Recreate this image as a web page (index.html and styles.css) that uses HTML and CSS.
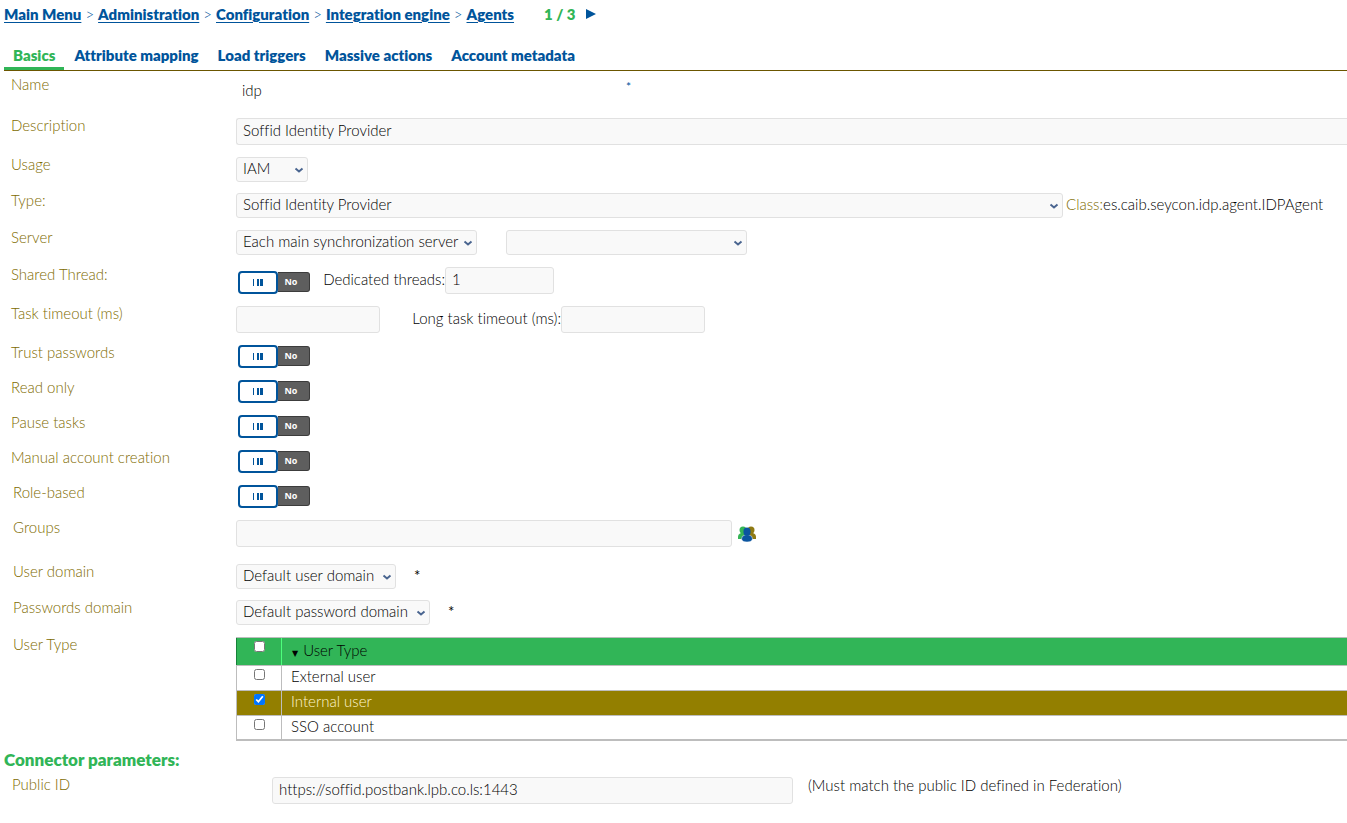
FILE: index.html
```html
<!DOCTYPE html>
<html lang="en">
<head>
<meta charset="utf-8">
<title>Agents</title>
<link rel="stylesheet" href="styles.css">
</head>
<body>
<header class="topbar">
  <nav class="crumbs" aria-label="Breadcrumb">
    <a href="#">Main Menu</a><span>&gt;</span><a href="#">Administration</a><span>&gt;</span><a href="#">Configuration</a><span>&gt;</span><a href="#">Integration engine</a><span>&gt;</span><a href="#">Agents</a>
  </nav>
  <div class="pager">1 / 3
    <button class="next" aria-label="Next"><svg width="10" height="10" viewBox="0 0 10 10"><path d="M0 0L10 5L0 10Z" fill="#00549b"/></svg></button>
  </div>
</header>
<nav class="tabs">
  <a class="tab active" href="#">Basics</a>
  <a class="tab" href="#">Attribute mapping</a>
  <a class="tab" href="#">Load triggers</a>
  <a class="tab" href="#">Massive actions</a>
  <a class="tab" href="#">Account metadata</a>
</nav>
<main>
  <div class="row tall"><label class="name" for="name">Name</label>
    <div class="field"><input class="box plain" id="name" value="idp"><span class="required">*</span></div></div>
  <div class="row input-row"><label class="name" for="desc">Description</label>
    <div class="field"><input class="box full" id="desc" value="Soffid Identity Provider"></div></div>
  <div class="row compact"><label class="name" for="usage">Usage</label>
    <div class="field"><select class="box w-usage" id="usage"><option>IAM</option></select></div></div>
  <div class="row"><label class="name" for="type">Type:</label>
    <div class="field"><select class="box w-type" id="type"><option>Soffid Identity Provider</option></select><span class="class-name"><span class="gold">Class:</span>es.caib.seycon.idp.agent.IDPAgent</span></div></div>
  <div class="row"><label class="name" for="server">Server</label>
    <div class="field"><select class="box w-server" id="server"><option>Each main synchronization server</option></select><select class="box w-server second" aria-label="Secondary server"><option></option></select></div></div>
  <div class="row input-row"><span class="name" id="l-shared">Shared Thread:</span>
    <div class="field"><button class="toggle low" role="switch" aria-checked="false" aria-labelledby="l-shared"><span class="knob"><i></i><i></i><i></i></span><span class="off">No</span></button><label class="inline threads" for="threads">Dedicated threads:</label><input class="box w-threads" id="threads" value="1"></div></div>
  <div class="row input-row"><label class="name" for="timeout">Task timeout (ms)</label>
    <div class="field"><input class="box w-timeout" id="timeout"><label class="inline long" for="long">Long task timeout (ms):</label><input class="box w-timeout" id="long"></div></div>
  <div class="row short"><span class="name" id="l-trust">Trust passwords</span>
    <div class="field"><button class="toggle" role="switch" aria-checked="false" aria-labelledby="l-trust"><span class="knob"><i></i><i></i><i></i></span><span class="off">No</span></button></div></div>
  <div class="row short"><span class="name" id="l-read">Read only</span>
    <div class="field"><button class="toggle" role="switch" aria-checked="false" aria-labelledby="l-read"><span class="knob"><i></i><i></i><i></i></span><span class="off">No</span></button></div></div>
  <div class="row short"><span class="name" id="l-pause">Pause tasks</span>
    <div class="field"><button class="toggle" role="switch" aria-checked="false" aria-labelledby="l-pause"><span class="knob"><i></i><i></i><i></i></span><span class="off">No</span></button></div></div>
  <div class="row short"><span class="name" id="l-manual">Manual account creation</span>
    <div class="field"><button class="toggle" role="switch" aria-checked="false" aria-labelledby="l-manual"><span class="knob"><i></i><i></i><i></i></span><span class="off">No</span></button></div></div>
  <div class="row short indent"><span class="name" id="l-role">Role-based</span>
    <div class="field"><button class="toggle" role="switch" aria-checked="false" aria-labelledby="l-role"><span class="knob"><i></i><i></i><i></i></span><span class="off">No</span></button></div></div>
  <div class="row groups indent"><label class="name" for="groups">Groups</label>
    <div class="field"><input class="box w-groups" id="groups"><button class="pick" aria-label="Select groups"><svg width="18" height="16" viewBox="0 0 18 16">
      <g fill="#35b556"><circle cx="5" cy="4" r="3.5"/><path d="M0 13V11Q0 8 3 7H8V13Z"/></g>
      <g fill="#8f7a13"><circle cx="13" cy="4" r="3.5"/><path d="M18 13V11Q18 8 15 7H10V13Z"/></g>
      <g fill="#0b55a0"><path stroke="#fff" stroke-width=".5" d="M3.500 13Q3.500 9.500 7 9H11Q14.500 9.500 14.500 13Q14 16 9 16Q4 16 3.500 13Z"/><ellipse cx="9" cy="5.700" rx="3.600" ry="4.200"/></g></svg></button></div></div>
  <div class="row compact indent"><label class="name" for="udomain">User domain</label>
    <div class="field"><select class="box w-udomain" id="udomain"><option>Default user domain</option></select><span class="star">*</span></div></div>
  <div class="row indent"><label class="name" for="pdomain">Passwords domain</label>
    <div class="field"><select class="box w-pdomain" id="pdomain"><option>Default password domain</option></select><span class="star">*</span></div></div>
  <div class="row types indent"><span class="name">User Type</span>
    <div class="field"><table class="grid">
      <thead><tr><th class="check"><input type="checkbox" aria-label="Select all"></th><th><span class="sort">▼</span>User Type</th></tr></thead>
      <tbody>
        <tr><td class="check"><input type="checkbox" id="ext"></td><td><label for="ext">External user</label></td></tr>
        <tr class="selected"><td class="check"><input type="checkbox" id="int" checked></td><td><label for="int">Internal user</label></td></tr>
        <tr><td class="check"><input type="checkbox" id="sso"></td><td><label for="sso">SSO account</label></td></tr>
      </tbody></table></div></div>
  <h2>Connector parameters:</h2>
  <div class="row public"><label class="name" for="pub">Public ID</label>
    <div class="field"><input class="box w-public" id="pub" value="https://soffid.postbank.lpb.co.ls:1443"><span class="hint">(Must match the public ID defined in Federation)</span></div></div>
</main>
</body>
</html>
```
FILE: styles.css
```css
* { box-sizing: border-box; }
body {
  margin: 0;
  padding: 4px 0 0 4px;
  overflow-x: hidden;
  background: #fff;
  color: #000;
  font: 300 15px/20px Lato, "Open Sans", sans-serif;
  font-variant-ligatures: none;
}
input, select, button { font: inherit; color: inherit; margin: 0; }
button { padding: 0; border: 0; background: none; }

.topbar { display: flex; gap: 30px; white-space: nowrap; }
.crumbs { display: flex; gap: 4px; color: #00549b; }
.crumbs a { color: #00549b; font-weight: 800; text-underline-offset: 2px; }
.pager { display: flex; gap: 10px; color: #31b557; font-weight: 800; }
.next { display: flex; align-items: center; }

.tabs { display: flex; gap: 1px; height: 47px; align-items: flex-end; border-bottom: 1px solid #6b5600; }
.tab {
  height: 25px;
  padding: 0 9px;
  border-bottom: 3px solid transparent;
  color: #00549b;
  font-weight: 800;
  text-decoration: none;
}
.tab.active { color: #31b557; border-color: #31b557; }

main { padding-top: 3px; }
.row { display: grid; grid-template-columns: 225px minmax(0, 1fr); min-height: 37px; padding-left: 7px; }
.row.tall { min-height: 41px; }
.row.input-row { min-height: 39px; }
.row.compact { min-height: 36px; }
.row.short { min-height: 35px; }
.row.groups { min-height: 44px; }
.indent .name { padding-left: 2px; }
.name, .gold { color: #806b00; }
.field { display: flex; align-items: flex-start; padding-top: 3px; white-space: nowrap; }

.box {
  height: 27px;
  padding: 0 6px 3px;
  border: 1px solid #e1e1e1;
  border-radius: 3px;
  background: #f9f9f9;
}
select.box {
  height: 25px;
  padding: 0 16px 3px 6px;
  appearance: none;
  background: #f9f9f9 url("data:image/svg+xml,%3Csvg xmlns='http://www.w3.org/2000/svg' width='10' height='7'%3E%3Cpath d='M1.500 1.500L5 4.500L8.500 1.500' fill='none' stroke='%234a6590' stroke-width='2'/%3E%3C/svg%3E") no-repeat right 3px top 9px;
}
.box.plain { width: 380px; border-color: transparent; background: none; padding: 0 5px 2px; }
.box.full { width: 100%; border-right: 0; border-radius: 3px 0 0 3px; }
.w-usage { width: 72px; }
.w-type { flex: 0 1 827px; min-width: 0; }
.w-server { width: 241px; }
.second { margin-left: 29px; }
.w-threads { width: 109px; }
.w-timeout { width: 144px; }
.w-groups { width: 496px; }
.w-udomain { width: 160px; }
.w-pdomain { width: 194px; }
.w-public { width: 521px; }

.required { margin-left: 10px; color: #00549b; font-size: 12px; font-weight: 400; line-height: 20px; }
.class-name { padding: 1px 0 0 3px; }
.inline { padding-top: 2px; text-align: right; }
.threads { width: 135px; }
.long { width: 181px; }
.star { padding: 1px 0 0 18px; font-weight: 400; }

.toggle { display: flex; width: 72px; margin-left: 2px; }
.toggle.low { margin-top: 4px; }
.knob {
  display: flex;
  gap: 2px;
  align-items: center;
  justify-content: center;
  width: 40px;
  height: 23px;
  border: 2px solid #00549b;
  border-radius: 4px;
  background: #fff;
}
.knob i { width: 2px; height: 7px; background: #00549b; }
.knob i:first-child { width: 1px; margin-right: 1px; }
.knob i:last-child { width: 3px; margin-left: -1px; }
.off {
  width: 32px;
  height: 20px;
  margin-top: 1px;
  padding-right: 5px;
  border: 1px solid #3c3c3c;
  border-left: 0;
  border-radius: 0 3px 3px 0;
  background: #5e5e5e;
  color: #fff;
  font: bold 9px/18px "Open Sans", sans-serif;
}
.pick { display: flex; padding: 6px 0 0 6px; }

.row.types { min-height: 116px; }
.grid { width: 100%; border-collapse: collapse; border-bottom: 2px solid #bdbdbd; }
.grid th, .grid td { height: 25px; padding: 0 9px; border: 1px solid #bdbdbd; border-right: 0; text-align: left; vertical-align: top; font-weight: inherit; line-height: 20px; }
.grid tr:last-child td { height: 24px; }
.grid th { height: 28px; padding-top: 2px; background: #31b557; border-left-color: #4dff7c; }
.grid th:first-child { border-left-color: #168239; }
.grid .check { width: 45px; padding: 0; }
.grid .check input { display: block; width: 11px; height: 11px; margin: 3px auto 0; }
.grid .selected { background: #937f00; color: #fff6cf; }
.sort { margin: 0 5px 0 1px; font: 8px/20px "DejaVu Sans", sans-serif; }

h2 { margin: 0; color: #31b557; font-size: 17px; font-weight: 800; line-height: 20px; }
.row.public { grid-template-columns: 260px minmax(0, 1fr); padding: 4px 0 0 8px; }
.public .hint { padding-left: 15px; line-height: 16px; }
.public .name { line-height: 20px; }
```
